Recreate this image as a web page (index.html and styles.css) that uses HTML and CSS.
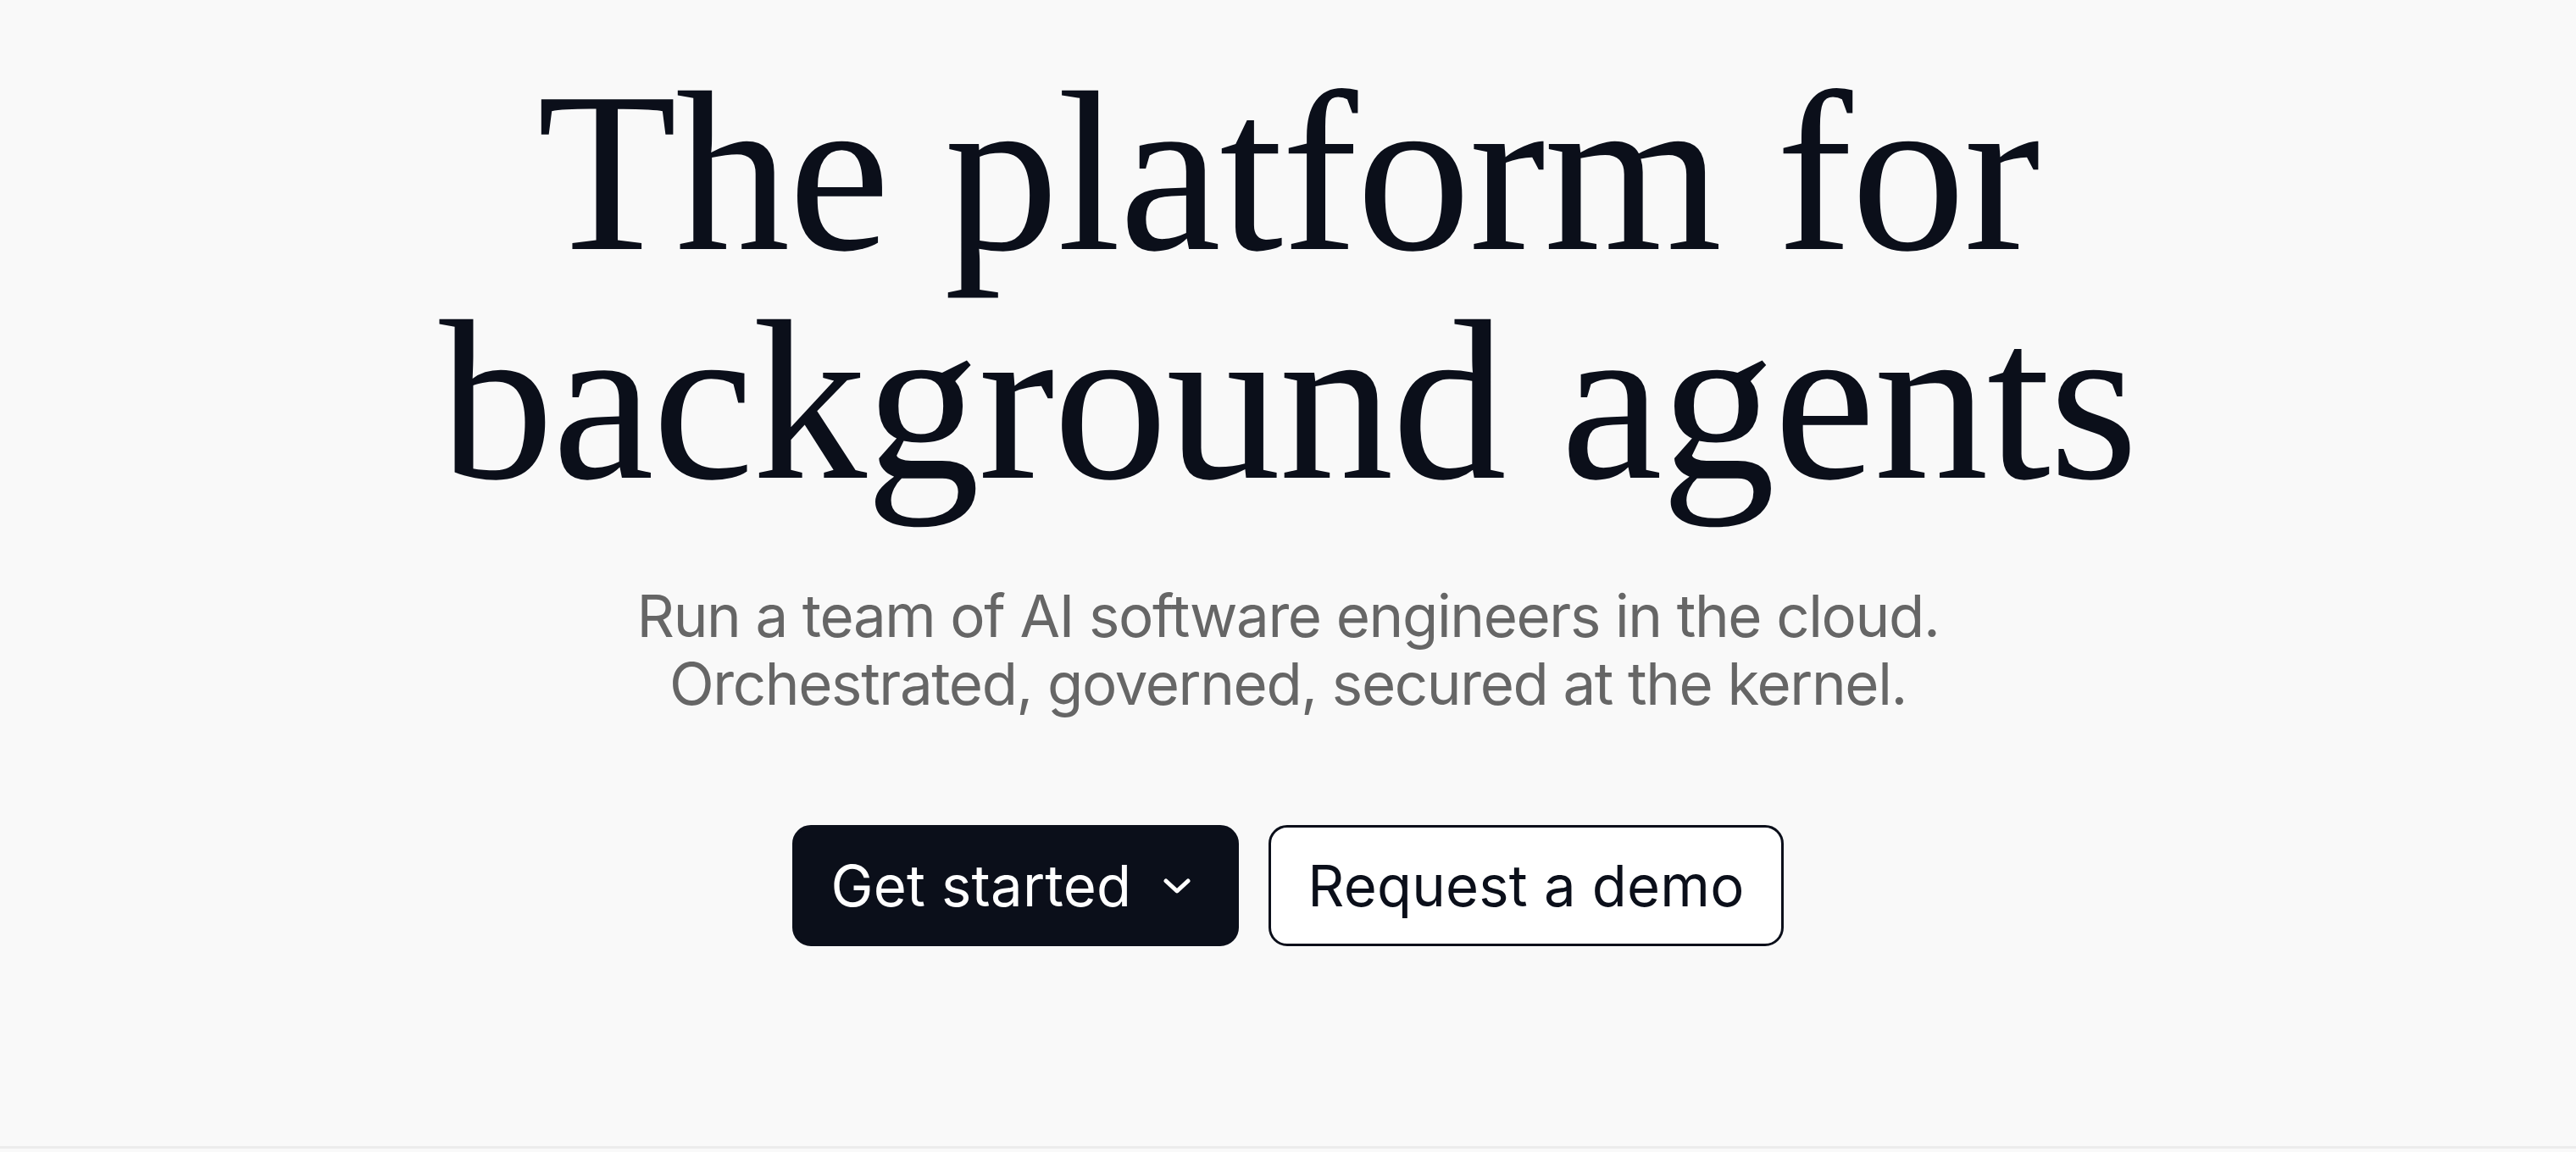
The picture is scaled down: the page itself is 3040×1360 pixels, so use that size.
FILE: index.html
```html
<!DOCTYPE html>
<html lang="en">
<head>
<meta charset="utf-8">
<title>The platform for background agents</title>
<link rel="stylesheet" href="styles.css">
</head>
<body>
<main class="hero">
  <h1 class="hero-title"><span class="title-line">The platform for</span><span class="title-line">background agents</span></h1>
  <p class="hero-sub">Run a team of AI software engineers in the cloud.<br>Orchestrated, governed, secured at the kernel.</p>
  <div class="hero-actions">
    <button class="btn btn-primary" type="button">Get started
      <svg class="chev" viewBox="0 0 32 18" width="32" height="18" aria-hidden="true"><path d="M3 3 L16 15 L29 3" fill="none" stroke="currentColor" stroke-width="5" stroke-linecap="round" stroke-linejoin="round"/></svg>
    </button>
    <button class="btn btn-outline" type="button">Request a demo</button>
  </div>
</main>
<div class="rule"></div>
</body>
</html>
```

FILE: styles.css
```css
html, body {
  margin: 0;
  padding: 0;
  background: #f9f9f9;
}
body {
  height: 1360px;
  display: flex;
  flex-direction: column;
  overflow: hidden;
}
.hero {
  flex: 1;
  display: flex;
  flex-direction: column;
  align-items: center;
  padding-top: 68px;
  box-sizing: border-box;
}
.hero-title {
  margin: 0;
  font-family: "Liberation Serif", "DejaVu Serif", serif;
  font-weight: 400;
  font-size: 270px;
  line-height: 270px;
  letter-spacing: -1.7px;
  color: #0b0f1a;
  text-align: center;
  display: flex;
  flex-direction: column;
  align-items: center;
}
.title-line {
  display: block;
  height: 270px;
}
.hero-sub {
  margin: 79px 0 0;
  font-family: Inter, "Liberation Sans", sans-serif;
  font-size: 69px;
  line-height: 80px;
  letter-spacing: -0.02em;
  color: #666666;
  text-align: center;
}
.hero-actions {
  margin-top: 127px;
  display: flex;
  gap: 35px;
}
.btn {
  height: 143px;
  box-sizing: border-box;
  border-radius: 22px;
  border: 3px solid #0b0f1a;
  font-family: Inter, "Liberation Sans", sans-serif;
  font-size: 67px;
  letter-spacing: 0.2px;
  display: flex;
  align-items: center;
  gap: 38px;
  cursor: pointer;
}
.btn-primary {
  background: #0b0f1a;
  color: #ffffff;
  padding: 0 54px 0 42px;
}
.btn-outline {
  background: #ffffff;
  color: #0b0f1a;
  padding: 0 43px;
}
.chev {
  display: block;
}
.rule {
  height: 3px;
  background: #ececec;
  margin-bottom: 4px;
}
```
